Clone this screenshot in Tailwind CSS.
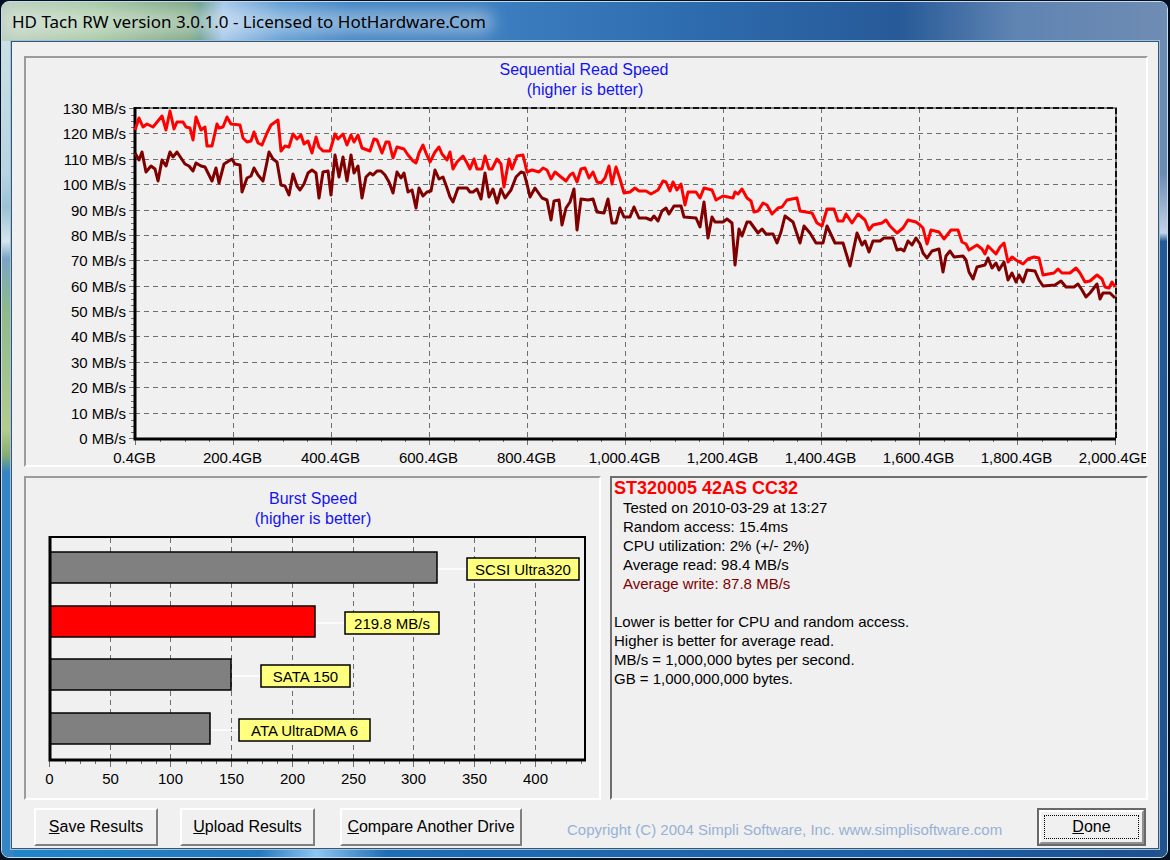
<!DOCTYPE html>
<html lang="en">
    <head>
        <title>HD Tach RW version 3.0.1.0</title>
        <meta charset="UTF-8" />
        <meta name="viewport" content="width=device-width, initial-scale=1.0" />
        <script src="https://cdn.jsdelivr.net/npm/@tailwindcss/browser@4"></script>
    </head>
    <body class="min-h-screen flex bg-[#04101f] pt-px pb-[2px] pl-px pr-[2px] font-['Liberation_Sans',sans-serif] text-[15px] text-black">
        <!-- window frame -->
        <div class="relative flex-1 flex flex-col rounded-lg overflow-hidden border border-[#c5dced] bg-[linear-gradient(90deg,#1f86cc_0%,#2478bd_22%,#8cc6f5_27%,#1f6db5_33%,#1c5ea6_80%,#1d4f8f_100%)]">
            <div class="absolute inset-y-0 left-0 w-3 bg-[linear-gradient(180deg,#cfe3e4_0%,#b7d4e2_20%,#9cc2d3_24%,#d5e5ee_28%,#7aa5c4_30%,#8fb98c_36%,#b3cc8e_50%,#86ad74_53%,#3584c4_55%,#3584c4_100%)]"></div>
            <div class="absolute inset-y-0 right-0 w-3 bg-[linear-gradient(180deg,#6b8bb3_0%,#6b8bb3_20%,#c3d3e6_27%,#245a96_28%,#22528c_100%)]"></div>

            <header class="relative h-[39px] shrink-0 flex items-center pl-[10px] bg-[linear-gradient(90deg,#bcd0bf_0%,#a5c8a4_8%,#7da784_16%,#6b9f90_17%,#a3c5ea_19%,#5c9ad2_24%,#3c80c2_30%,#3b7dbf_43%,#2d6bae_60%,#275a98_77%,#5f84b2_87%,#6f8cb3_100%)]">
                <h1 class="relative font-['Noto_Sans','Open_Sans',sans-serif] text-[17px] leading-6">
                    <span class="absolute -inset-x-2 inset-y-0 rounded-full bg-white/40 blur-sm"></span>
                    <span class="relative">HD Tach RW version 3.0.1.0 - Licensed to HotHardware.Com</span>
                </h1>
            </header>

            <main class="relative flex-1 flex flex-col ml-[9px] mr-[8px] mb-[8px] pl-[12px] pr-[10px] pt-[14px] border border-[#38566f] outline outline-[#9dc2dd] bg-[#f0f0f0]">
                <section class="border-2 border-t-[#9b9b9b] border-l-[#9b9b9b] border-r-white border-b-white">
                    <svg viewBox="26 58 1120 407" class="block w-full h-auto" role="img" aria-label="Sequential Read Speed">
                        <g class="fill-[#1414f0] text-[16px]" text-anchor="middle">
                            <text x="584" y="75">Sequential Read Speed</text>
                            <text x="585" y="95">(higher is better)</text>
                        </g>
                        <g id="readAxes"></g>
                        <g fill="none" stroke-width="3" stroke-linejoin="round">
                            <polyline stroke="#f00" points="135,130 139,118 143,127 147,124 153,127 162,116 166,130 170,111 174,129 177,122 183,122 186,127 190,128 193,140 196,117 201,130 205,127 207,146 212,146 217,124 219,128 223,127 227,117 231,124 240,125 243,138 247,142 251,141 254,132 258,143 262,145 267,133 271,125 278,120 281,151 285,146 289,147 293,134 297,139 301,135 304,144 308,141 312,153 316,137 319,147 323,151 330,151 335,134 338,139 343,134 347,145 351,135 354,142 358,135 362,148 370,151 374,139 377,140 382,153 386,142 389,142 393,158 397,147 404,149 408,155 413,161 416,163 419,153 423,145 426,153 430,162 435,152 439,147 442,154 447,160 450,152 453,169 457,162 463,156 467,163 470,169 474,159 477,169 482,169 485,156 489,169 492,169 497,159 501,164 504,187 509,159 512,169 517,156 523,155 527,172 532,170 539,172 543,168 547,170 551,179 555,172 561,177 566,181 570,175 573,173 577,182 581,169 585,168 589,178 593,172 597,182 601,183 605,178 609,166 612,184 616,167 620,179 624,193 630,192 635,188 639,191 646,191 651,194 658,190 663,181 666,182 670,191 673,182 677,190 681,184 685,205 688,192 696,192 700,198 704,188 712,190 716,200 723,196 733,198 735,192 738,194 742,189 747,198 751,201 754,212 758,211 763,203 767,205 772,214 778,208 782,207 787,200 797,198 800,211 812,213 817,223 822,226 827,209 834,209 838,221 843,221 846,214 852,223 858,214 865,220 869,230 873,225 882,223 886,220 890,226 897,233 903,228 908,220 916,222 920,225 923,228 927,244 931,230 939,232 944,239 951,230 958,230 962,242 966,244 969,250 977,245 982,249 985,254 988,246 996,254 1000,247 1004,243 1008,262 1012,257 1016,260 1023,264 1028,259 1034,257 1039,258 1043,275 1054,273 1058,269 1062,273 1070,273 1076,268 1080,273 1085,282 1090,281 1097,275 1102,279 1105,287 1109,288 1112,282 1115,287" />
                            <polyline stroke="#800000" points="135,153 139,160 142,152 146,172 151,166 155,169 158,181 162,160 166,166 170,152 173,157 177,152 181,158 185,164 189,166 193,171 196,163 201,166 205,167 209,175 212,181 216,168 219,183 224,164 232,159 235,164 240,165 242,192 247,178 251,176 254,168 258,175 263,181 267,162 269,152 273,159 277,162 281,185 285,186 289,195 293,174 297,186 300,190 304,184 308,173 312,170 316,173 319,198 323,172 328,171 331,195 335,155 339,177 343,157 347,181 351,155 354,173 358,166 362,198 366,177 370,173 373,175 377,171 381,171 385,175 389,182 393,193 397,172 401,178 404,173 408,192 412,190 416,208 419,188 423,196 427,192 431,191 435,170 439,179 443,177 447,188 450,197 453,202 458,188 467,188 470,192 473,192 477,189 481,199 485,173 489,197 493,189 497,203 501,189 505,198 511,190 516,177 521,172 524,173 527,184 530,197 535,188 542,198 547,200 551,220 554,201 559,200 562,225 566,208 570,202 574,189 577,230 581,199 588,200 593,199 597,212 604,213 608,199 612,223 616,223 620,208 624,217 630,217 634,207 639,218 646,218 651,220 654,216 658,221 662,211 666,208 669,214 674,206 681,206 684,217 696,218 700,227 704,202 708,238 712,217 715,222 723,222 727,219 732,223 735,265 739,229 742,236 747,222 750,222 758,233 762,229 766,234 773,234 777,243 781,232 785,216 793,222 800,243 804,226 810,233 816,243 823,243 827,226 835,243 843,243 850,266 857,233 862,245 865,241 869,252 873,241 880,241 884,238 893,238 897,250 901,249 904,251 908,241 912,245 916,238 920,244 923,253 927,258 932,251 939,249 943,272 946,256 950,251 954,257 963,256 966,260 969,272 973,279 977,267 985,265 988,258 992,268 996,263 999,270 1004,262 1008,280 1012,273 1016,282 1019,275 1023,282 1027,270 1035,271 1039,280 1043,286 1055,285 1061,281 1066,287 1074,287 1078,284 1082,290 1086,297 1090,293 1097,284 1100,299 1103,293 1110,293 1115,298" />
                        </g>
                    </svg>
                </section>

                <div class="grid grid-cols-[577fr_538fr] gap-[9px] mt-[9px]">
                    <section class="border-2 border-t-[#9b9b9b] border-l-[#9b9b9b] border-r-white border-b-white">
                        <svg viewBox="26 478 573 320" class="block w-full h-auto" role="img" aria-label="Burst Speed">
                            <g class="fill-[#1414f0] text-[16px]" text-anchor="middle">
                                <text x="313" y="504">Burst Speed</text>
                                <text x="313" y="524">(higher is better)</text>
                            </g>
                            <g id="burstAxes"></g>
                            <g id="burstBars"></g>
                            <path d="M50 536V760H586" fill="none" stroke="#000" stroke-width="3" />
                        </svg>
                    </section>

                    <section class="border-2 border-t-[#6e6e6e] border-l-[#6e6e6e] border-r-white border-b-white pl-[2px] pt-px leading-[19px]">
                        <h2 class="font-bold text-[#f00] text-[18px] leading-[19px]">ST320005 42AS CC32</h2>
                        <ul class="pl-[9px]">
                            <li>Tested on 2010-03-29 at 13:27</li>
                            <li>Random access: 15.4ms</li>
                            <li>CPU utilization: 2% (+/- 2%)</li>
                            <li>Average read: 98.4 MB/s</li>
                            <li class="text-[#800000]">Average write: 87.8 MB/s</li>
                        </ul>
                        <p class="mt-[19px]">Lower is better for CPU and random access.</p>
                        <p>Higher is better for average read.</p>
                        <p>MB/s = 1,000,000 bytes per second.</p>
                        <p>GB = 1,000,000,000 bytes.</p>
                    </section>
                </div>

                <footer class="flex items-start pt-[8px] pl-[10px] text-[16px]">
                    <button class="w-[124px] h-[38px] border-2 border-t-white border-l-white border-r-[#808080] border-b-[#808080]"><u>S</u>ave Results</button>
                    <button class="ml-[22px] w-[135px] h-[38px] border-2 border-t-white border-l-white border-r-[#808080] border-b-[#808080]"><u>U</u>pload Results</button>
                    <button class="ml-[25px] w-[182px] h-[38px] border-2 border-t-white border-l-white border-r-[#808080] border-b-[#808080] whitespace-nowrap"><u>C</u>ompare Another Drive</button>
                    <p class="ml-[45px] mt-[11px] text-[15px] leading-[22px] text-[#96b2d4] whitespace-nowrap">Copyright (C) 2004 Simpli Software, Inc. www.simplisoftware.com</p>
                    <button class="ml-auto mr-[2px] w-[109px] h-[38px] border-2 border-[#696969]">
                        <span class="flex h-full p-[3px] border-2 border-t-white border-l-white border-r-[#909090] border-b-[#909090]">
                            <span class="flex-1 flex items-center justify-center border border-dotted border-black"><span><u>D</u>one</span></span>
                        </span>
                    </button>
                </footer>
            </main>
        </div>

        <script>
            const line = (x1, y1, x2, y2, attrs) =>
                `<line x1="${x1}" y1="${y1}" x2="${x2}" y2="${y2}" ${attrs} />`;
            const label = (x, y, anchor, text) =>
                `<text x="${x}" y="${y}" text-anchor="${anchor}" class="text-[15px]">${text}</text>`;
            const dashed = 'stroke="#6e6e6e" stroke-width="1" stroke-dasharray="5 4"';
            const tick = 'stroke="#6e6e6e" stroke-width="1"';

            // sequential read chart
            const left = 135, right = 1115, top_ = 108, bottom = 438;
            let out = "";
            for (let i = 0; i <= 13; i++) {
                const y = Math.round(bottom - (i * (bottom - top_)) / 13) + 0.5;
                if (i > 0 && i < 13) out += line(left, y, right, y, dashed);
                out += line(129, y, left, y, tick);
                for (let m = 1; m < 4 && i < 13; m++) {
                    const my = Math.round(y - m * 6.3) + 0.5;
                    out += line(131, my, left, my, tick);
                }
                out += label(126, y + 5, "end", `${i * 10} MB/s`);
            }
            for (let i = 0; i <= 10; i++) {
                const x = Math.round(left + (i * (right - left)) / 10) + 0.5;
                if (i > 0 && i < 10) out += line(x, top_, x, bottom, dashed);
                out += line(x, bottom, x, bottom + 7, tick);
                for (let m = 1; m < 4 && i < 10; m++) {
                    const mx = Math.round(x + m * 24.5) + 0.5;
                    out += line(mx, bottom, mx, bottom + 4, tick);
                }
                const gb = i * 200 + 0.4;
                out += label(x - 1, 463, "middle", gb.toLocaleString("en-US") + "GB");
            }
            out += `<path d="M${left} ${top_}H${right + 1}V${bottom}" fill="none" stroke="#888" stroke-width="2" />`;
            out += `<path d="M${left} ${top_}H${right + 1}V${bottom}" fill="none" stroke="#111" stroke-width="2" stroke-dasharray="6 3" />`;
            out += `<path d="M${left} ${top_ - 1}V${bottom + 1}H${right + 1}" fill="none" stroke="#000" stroke-width="3" />`;
            document.getElementById("readAxes").innerHTML = out;

            // burst chart
            out = '<path d="M50 537H585V760" fill="none" stroke="#000" stroke-width="2" />';
            for (let i = 0; i <= 8; i++) {
                const x = Math.round(49 + i * 60.7) + 0.5;
                if (i > 0) out += line(x, 538, x, 760, dashed);
                out += line(x, 760, x, 767, tick);
                for (let m = 1; m < 4; m++) {
                    const mx = Math.round(x + m * 15.2) + 0.5;
                    out += line(mx, 760, mx, 764, tick);
                }
                out += label(x, 784, "middle", i * 50);
            }
            document.getElementById("burstAxes").innerHTML = out;

            const bars = [
                { name: "SCSI Ultra320", y: 552, end: 437, box: 467, w: 112, fill: "#808080" },
                { name: "219.8 MB/s", y: 606, end: 315, box: 345, w: 94, fill: "#ff0000" },
                { name: "SATA 150", y: 659, end: 231, box: 261, w: 89, fill: "#808080" },
                { name: "ATA UltraDMA 6", y: 713, end: 210, box: 239, w: 131, fill: "#808080" },
            ];
            document.getElementById("burstBars").innerHTML = bars
                .map(
                    (b) =>
                        `<rect x="50" y="${b.y}" width="${b.end - 50}" height="31" fill="${b.fill}" stroke="#000" stroke-width="1.5" />` +
                        line(b.end + 1, b.y + 17, b.box, b.y + 17, 'stroke="#fff" stroke-width="1.5"') +
                        `<rect x="${b.box}" y="${b.y + 6}" width="${b.w}" height="22" fill="#ffff80" stroke="#000" stroke-width="1.5" />` +
                        label(b.box + b.w / 2, b.y + 23, "middle", b.name)
                )
                .join("");
        </script>
    </body>
</html>
